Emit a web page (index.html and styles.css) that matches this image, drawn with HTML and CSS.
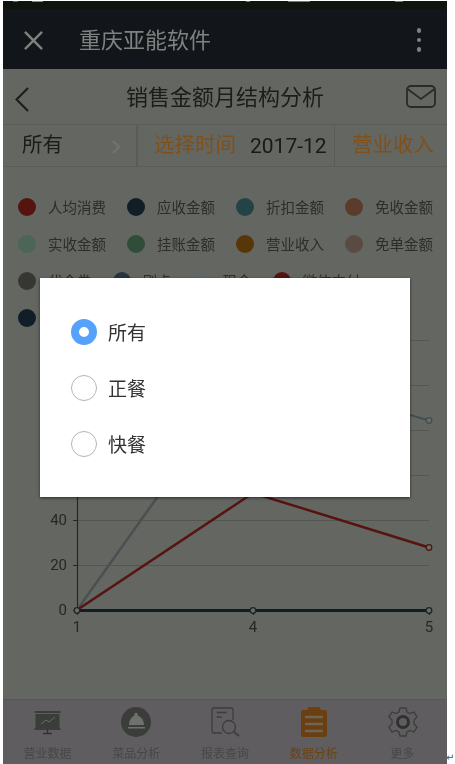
FILE: index.html
```html
<!DOCTYPE html>
<html lang="zh">
<head>
<meta charset="utf-8">
<title>销售金额月结构分析</title>
<link rel="stylesheet" href="styles.css">
</head>
<body>
<div class="phone">
  <div class="status"></div>
  <header class="appbar">
    <svg class="close" viewBox="0 0 20 20"><path d="M1 1 19 19M19 1 1 19"/></svg>
    <span class="app-title">重庆亚能软件</span>
    <span class="dots"><i></i><i></i><i></i></span>
  </header>
  <nav class="navbar">
    <svg class="back" viewBox="0 0 14 25"><path d="M13 1 1.500 12.500 13 24"/></svg>
    <h1 class="nav-title">销售金额月结构分析</h1>
    <svg class="mail" viewBox="0 0 30 24"><rect x="1" y="1" width="28" height="21" rx="4"/><path d="M1.500 4 15 14 28.500 4"/></svg>
  </nav>
  <section class="filters">
    <div class="f-type"><span>所有</span><svg class="chev" viewBox="0 0 9 14"><path d="M1 1l6 6-6 6"/></svg></div>
    <div class="f-time"><span class="accent">选择时间</span><span class="date">2017-12</span></div>
    <div class="f-metric accent">营业收入</div>
  </section>
  <section class="legend">
    <div class="lg"><i class="c1"></i>人均消费</div>
    <div class="lg"><i class="c2"></i>应收金额</div>
    <div class="lg"><i class="c3"></i>折扣金额</div>
    <div class="lg"><i class="c4"></i>免收金额</div>
    <div class="lg"><i class="c5"></i>实收金额</div>
    <div class="lg"><i class="c6"></i>挂账金额</div>
    <div class="lg"><i class="c7"></i>营业收入</div>
    <div class="lg"><i class="c8"></i>免单金额</div>
    <div class="lg"><i class="c9"></i>代金券</div>
    <div class="lg"><i class="c10"></i>刷卡</div>
    <div class="lg"><i class="c11"></i>现金</div>
    <div class="lg"><i class="c12"></i>微信支付</div>
    <div class="lg"><i class="c2"></i>支付宝</div>
  </section>
  <svg class="chart" viewBox="0 0 444 310" width="444" height="310">
    <g class="grid">
      <path d="M74 3.500H426M74 48.500H426M74 93.500H426M74 138.500H426M74 183.500H426M74 228.500H426"/>
    </g>
    <path class="axis" d="M74.500 2V273M70 273.500H74M250.500 273.500V278M426.500 273.500V278M74.500 273.500V278M70 228.500H74M70 183.500H74"/>
    <polyline class="l-teal" points="300,50 409,78.500 426,83.500"/>
    <polyline class="l-gray" points="74,273 180,124"/>
    <polyline class="l-red" points="74,273 250,156 426,210.500"/>
    <polyline class="l-navy" points="74,273.500 426,273.500"/>
    <g class="pt">
      <circle class="pt-teal" cx="426" cy="83.500" r="2.800"/>
      <circle class="pt-red" cx="426" cy="210.500" r="2.800"/>
      <circle cx="74" cy="273.500" r="2.800"/>
      <circle cx="250" cy="273.500" r="2.800"/>
      <circle cx="426" cy="273.500" r="2.800"/>
    </g>
    <g class="ylab">
      <text x="64" y="188">40</text>
      <text x="64" y="233">20</text>
      <text x="64" y="278">0</text>
    </g>
    <g class="xlab">
      <text x="74" y="295">1</text>
      <text x="250" y="295">4</text>
      <text x="426" y="295">5</text>
    </g>
  </svg>
  <footer class="tabbar">
    <div class="tab">
      <svg viewBox="0 0 30 30"><path class="ln" d="M2.500 5H28.500M2.500 22H28.500"/><rect class="fill-d" x="3.500" y="7" width="24" height="14"/><path class="ln-l" d="M9 17l5-4 3 2 6-5"/><path class="ln" d="M15.500 22v4M11 26.500H20"/></svg>
      <span>营业数据</span>
    </div>
    <div class="tab">
      <svg viewBox="0 0 30 30"><circle class="fill-d" cx="15" cy="15" r="15"/><path class="fill-l" d="M8 18c0-5 3-8.500 5.500-9.500A1.800 1.800 0 1 1 16.500 8.500C20 9.500 23 13 23 18z"/><rect class="fill-l" x="7" y="20" width="17" height="1.500"/></svg>
      <span>菜品分析</span>
    </div>
    <div class="tab">
      <svg viewBox="0 0 30 30"><path class="st" d="M12 26H3.500A1.500 1.500 0 0 1 2 24.500V2.500A1.500 1.500 0 0 1 3.500 1H21.500A1.500 1.500 0 0 1 23 2.500V13M6.700 5.500H16.700M6.700 10H11.700"/><circle class="st" cx="19" cy="20" r="6.500"/><path class="st-b" d="M24 25l5 4"/></svg>
      <span>报表查询</span>
    </div>
    <div class="tab tab-on">
      <svg viewBox="0 0 26 30"><path class="fill-a" d="M8 0h10a1.500 1.500 0 0 1 1.500 1.500V3h4.500a2 2 0 0 1 2 2v23a2 2 0 0 1-2 2H2a2 2 0 0 1-2-2V5a2 2 0 0 1 2-2h4.500V1.500A1.500 1.500 0 0 1 8 0z"/><path class="ln-t" d="M4 10H22M4 17H22M4 24H22"/></svg>
      <span>数据分析</span>
    </div>
    <div class="tab">
      <svg viewBox="0 0 30 30"><path class="st" d="M12 1h6l1 4 3 1.500 4-1.500 3 5-3 3v4l3 3-3 5-4-1.500-3 1.500-1 4h-6l-1-4-3-1.500-4 1.500-3-5 3-3v-4l-3-3 3-5 4 1.500 3-1.500z"/><circle class="gear" cx="15" cy="15" r="5.500"/></svg>
      <span>更多</span>
    </div>
  </footer>
  <div class="modal">
    <div class="opt"><span class="radio on"></span><span class="opt-text">所有</span></div>
    <div class="opt"><span class="radio"></span><span class="opt-text">正餐</span></div>
    <div class="opt"><span class="radio"></span><span class="opt-text">快餐</span></div>
  </div>
</div>
<span class="mark">↵</span>
</body>
</html>
```
FILE: styles.css
```css
* { box-sizing: border-box; }
html, body { margin: 0; padding: 0; background: #fff; overflow: hidden; }
body { height: 764px; font-family: "Noto Sans CJK SC", "Noto Sans", sans-serif; position: relative; }

.phone { position: relative; width: 444px; height: 763px; margin: 1px 0 0 3px; background: #646662; display: flex; flex-direction: column; filter: blur(0.35px); }

.status { height: 8px; background-color: #10140f; background-image: linear-gradient(#8a8a78, #8a8a78), linear-gradient(#4f6a68, #4f6a68), linear-gradient(#777, #777), linear-gradient(#777, #777), linear-gradient(#777, #777); background-size: 11px 1px, 5px 1px, 4px 1px, 22px 1px, 8px 1px; background-position: 29px 0, 10px 0, 243px 0, 285px 0, 392px 0; background-repeat: no-repeat; }
.appbar { height: 60px; background: #12161b; display: flex; align-items: center; color: #80827f; padding: 0 26px 0 21px; }
.close { width: 19px; height: 19px; stroke: #80827f; stroke-width: 2.500; fill: none; flex: none; margin-top: 2px; }
.app-title { font-size: 22px; margin-left: 36px; flex: 1; margin-bottom: 2px; }
.dots { display: flex; flex-direction: column; gap: 5px; margin-top: 2px; }
.dots i { width: 4.500px; height: 4.500px; border-radius: 50%; background: #80827f; }

.navbar { height: 55px; display: flex; align-items: center; justify-content: space-between; padding: 0 11px 0 12px; position: relative; }
.nav-title { position: absolute; left: 0; right: 0; top: 10px; margin: 0; text-align: center; font-size: 22px; line-height: 32px; font-weight: 400; color: #1c1d1b; }
.back { width: 14px; height: 25px; fill: none; stroke: #1c1d1b; stroke-width: 2; margin-top: 5px; }
.mail { width: 30px; height: 24px; fill: none; stroke: #2a2b29; stroke-width: 1.800; }

.filters { height: 43px; display: flex; border-top: 1px solid #5a5c58; border-bottom: 1px solid #5a5c58; font-size: 20.500px; }
.f-type { width: 135px; padding: 0 15px 5px 19px; display: flex; align-items: center; justify-content: space-between; color: #1c1d1b; border-right: 2px solid #5a5c58; }
.chev { width: 9px; height: 14px; fill: none; stroke: #71736f; stroke-width: 2.400; margin-top: 7px; }
.f-time { width: 197px; display: flex; align-items: center; padding: 0 0 5px 16px; gap: 14px; border-right: 1px solid #5a5c58; }
.date { font-family: Roboto, sans-serif; font-size: 21px; color: #191a18; margin-top: 5px; }
.f-metric { flex: 1; display: flex; align-items: center; padding: 0 0 5px 17px; }
.accent { color: #80501a; }

.legend { display: flex; flex-wrap: wrap; gap: 19px 21px; padding: 31px 0 0 15px; height: 170px; align-content: flex-start; }
.lg { display: flex; align-items: flex-start; gap: 12px; height: 18px; line-height: 18px; font-size: 14.500px; color: #2c2e2b; white-space: nowrap; }
.lg i { width: 18px; height: 18px; border-radius: 50%; flex: none; }
.c1 { background: #551410; }
.c2 { background: #121e27; }
.c3 { background: #234346; }
.c4 { background: #5a3b2c; }
.c5 { background: #4b6656; }
.c6 { background: #2f4d39; }
.c7 { background: #573608; }
.c8 { background: #594b41; }
.c9 { background: #363732; }
.c10 { background: #28343f; }
.c11 { background: #5f6768; }
.c12 { background: #551410; }

.chart { display: block; flex: none; }
.grid path { stroke: #545650; stroke-width: 1; fill: none; }
.axis { stroke: #262825; stroke-width: 1.200; fill: none; }
.l-teal { stroke: #3f4f52; stroke-width: 2; fill: none; }
.l-gray { stroke: #4a5052; stroke-width: 2.500; fill: none; }
.l-red { stroke: #551410; stroke-width: 2.500; fill: none; }
.l-navy { stroke: #121e27; stroke-width: 3; fill: none; }
.pt circle { fill: #6a6c67; stroke: #1e2528; stroke-width: 1.300; }
.pt .pt-red { stroke: #551410; }
.pt .pt-teal { stroke: #3f4f52; }
.ylab text { font: 15px Roboto, sans-serif; fill: #262825; text-anchor: end; }
.xlab text { font: 15px Roboto, sans-serif; fill: #262825; text-anchor: middle; }

.tabbar { margin-top: auto; height: 65px; flex: none; background: #5f5d5f; border-top: 1px solid #575757; display: flex; }
.tab { flex: 1; display: flex; flex-direction: column; align-items: center; padding-top: 7px; color: #474747; font-size: 12px; }
.tab svg { width: 30px; height: 30px; margin-bottom: 8px; flex: none; }
.tab span { line-height: 16px; }
.tab-on { color: #6a4313; }
.ln { stroke: #313331; stroke-width: 1.500; fill: none; }
.ln-l { stroke: #6a6c6a; stroke-width: 1; fill: none; }
.ln-t { stroke: #6d6559; stroke-width: 2.500; fill: none; }
.fill-d { fill: #3b3d3b; }
.fill-l { fill: #6f716d; }
.fill-a { fill: #6a4010; }
.st { stroke: #3b3d3b; stroke-width: 1.300; fill: none; }
.st-b { stroke: #3b3d3b; stroke-width: 1.800; fill: none; }
.gear { stroke: #2f312f; stroke-width: 3; fill: none; }

.modal { position: absolute; left: 37px; top: 277px; width: 370px; height: 219px; background: #fff; box-shadow: 0 1px 3px rgba(0, 0, 0, .55); padding: 26px 0 0 31px; }
.opt { height: 56px; display: flex; align-items: center; gap: 11px; font-size: 19px; color: #333; }
.opt-text { margin-bottom: 2px; }
.radio { width: 26px; height: 26px; border-radius: 50%; border: 1.300px solid #b5b5b5; flex: none; }
.radio.on { border: 8px solid #55a1fb; background: #fff; }

.mark { position: absolute; left: 446px; top: 752px; font: 10px "DejaVu Sans", sans-serif; color: #555; }
```
